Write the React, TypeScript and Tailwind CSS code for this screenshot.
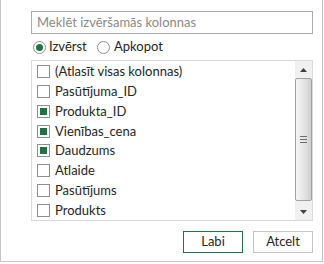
import React from "react";

const items: { label: string; checked: boolean }[] = [
  { label: "(Atlasīt visas kolonnas)", checked: false },
  { label: "Pasūtījuma_ID", checked: false },
  { label: "Produkta_ID", checked: true },
  { label: "Vienības_cena", checked: true },
  { label: "Daudzums", checked: true },
  { label: "Atlaide", checked: false },
  { label: "Pasūtījums", checked: false },
  { label: "Produkts", checked: false },
];

function Checkbox({ checked }: { checked: boolean }) {
  return (
    <div className="w-[13px] h-[13px] border border-[#8f8f8f] bg-white flex items-center justify-center shrink-0">
      {checked && <div className="w-[7px] h-[7px] bg-[#217346]" />}
    </div>
  );
}

function Radio({ checked }: { checked: boolean }) {
  return (
    <div className="w-[13px] h-[13px] rounded-full border border-[#8f8f8f] bg-white flex items-center justify-center shrink-0">
      {checked && <div className="w-[7px] h-[7px] rounded-full bg-[#217346]" />}
    </div>
  );
}

export default function App() {
  return (
    <div
      className="w-[323px] h-[262px] bg-white border-x border-b border-[#c6c6c6] flex flex-col pl-[30px] text-[13px] text-[#262626]"
      style={{ fontFamily: 'Lato, "Noto Sans", sans-serif' }}
    >
      <div className="mt-[11px] w-[282px] h-[23px] border border-[#ababab] flex items-center pl-[5px] text-[#8a8a8a]">
        Meklēt izvēršamās kolonnas
      </div>
      <div className="mt-[6px] h-[14px] flex items-center">
        <div className="ml-[2px] w-[64px] flex items-center gap-[3px]">
          <Radio checked />
          <span>Izvērst</span>
        </div>
        <div className="flex items-center gap-[4px]">
          <Radio checked={false} />
          <span>Apkopot</span>
        </div>
      </div>
      <div className="mt-[6px] w-[282px] h-[161px] border border-[#dadada] flex">
        <div className="flex-1 flex flex-col pt-[1px] pl-[5px]">
          {items.map((it) => (
            <div key={it.label} className="h-[20px] flex items-center gap-[5px]">
              <Checkbox checked={it.checked} />
              <span className="leading-none">{it.label}</span>
            </div>
          ))}
        </div>
        <div className="w-[17px] bg-[#f0f0f0] flex flex-col">
          <div className="h-[17px] flex items-center justify-center">
            <svg width="7" height="4" viewBox="0 0 7 4">
              <path d="M0 4 L3.5 0 L7 4 Z" fill="#404040" />
            </svg>
          </div>
          <div className="flex-1 mb-[2px] rounded-[2px] border border-[#a0a0a0] bg-gradient-to-r from-[#f4f4f4] via-[#e6e6e6] to-[#cfcfcf] flex items-center justify-center">
            <div className="flex flex-col gap-[2px]">
              <div className="w-[7px] h-px bg-[#6d6d6d]" />
              <div className="w-[7px] h-px bg-[#6d6d6d]" />
              <div className="w-[7px] h-px bg-[#6d6d6d]" />
            </div>
          </div>
          <div className="h-[17px] flex items-center justify-center">
            <svg width="7" height="4" viewBox="0 0 7 4">
              <path d="M0 0 L7 0 L3.5 4 Z" fill="#404040" />
            </svg>
          </div>
        </div>
      </div>
      <div className="mt-[10px] flex gap-[10px] ml-[152px]">
        <div className="w-[60px] h-[22px] border border-[#217346] flex items-center justify-center">
          Labi
        </div>
        <div className="w-[60px] h-[22px] border border-[#c6c6c6] flex items-center justify-center">
          Atcelt
        </div>
      </div>
    </div>
  );
}
